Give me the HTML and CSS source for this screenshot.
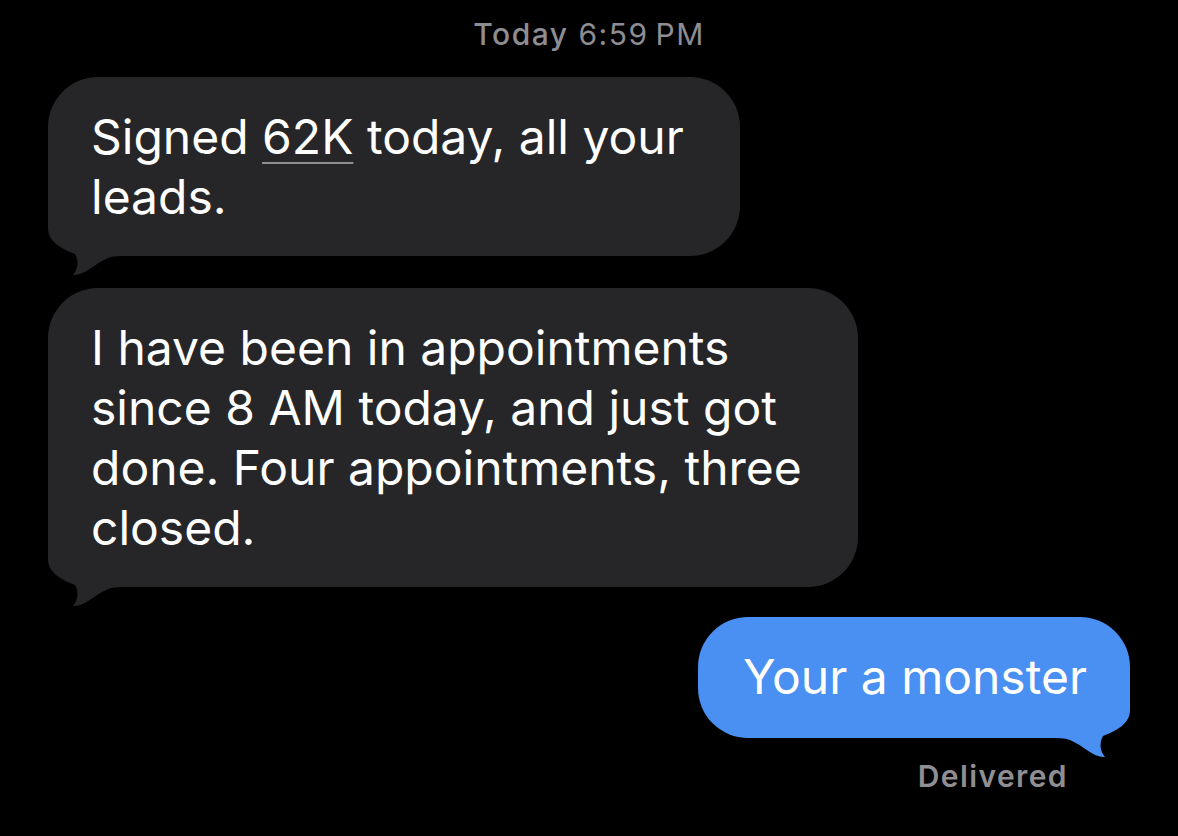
FILE: index.html
```html
<!DOCTYPE html>
<html lang="en">
<head>
    <meta charset="UTF-8">
    <meta name="viewport" content="width=device-width, initial-scale=1.0">
    <title>Messages</title>
    <link rel="stylesheet" href="styles.css">
</head>
<body>
    <div class="thread">
        <div class="stamp"><span class="stamp-day">Today</span> 6:59&#8201;PM</div>

        <div class="msg msg-in">
            Signed <span class="data-link">62K</span> today, all your<br>leads.
            <svg class="tail" viewBox="0 0 80 70" width="80" height="70" aria-hidden="true">
                <path d="M0 0 L0 22 C0 36 14 43 27 48 C31 55 30 63 25 69 C36 70 46 58 60 52 C66 50 72 50 80 50 L80 0 Z"/>
            </svg>
        </div>

        <div class="msg msg-in">
            I have been in appointments<br>since 8 AM today, and just got<br>done. Four appointments, three<br>closed.
            <svg class="tail" viewBox="0 0 80 70" width="80" height="70" aria-hidden="true">
                <path d="M0 0 L0 22 C0 36 14 43 27 48 C31 55 30 63 25 69 C36 70 46 58 60 52 C66 50 72 50 80 50 L80 0 Z"/>
            </svg>
        </div>

        <div class="msg msg-out">
            Your a monster
            <svg class="tail" viewBox="0 0 80 70" width="80" height="70" aria-hidden="true">
                <path d="M0 0 L0 22 C0 36 14 43 27 48 C31 55 30 63 25 69 C36 70 46 58 60 52 C66 50 72 50 80 50 L80 0 Z"/>
            </svg>
        </div>

        <div class="status">Delivered</div>
    </div>
</body>
</html>
```

FILE: styles.css
```css
/* General styles */
body {
    margin: 0;
    padding: 0;
    background-color: #000;
    font-family: Inter, "Noto Sans", sans-serif;
    color: #fff;
}

/* Conversation column */
.thread {
    display: flex;
    flex-direction: column;
    align-items: flex-start;
    padding: 16px 48px 0;
}

/* Timestamp header */
.stamp {
    align-self: center;
    font-size: 30px;
    line-height: 36px;
    letter-spacing: 1.5px;
    color: #8d8d92;
    margin-bottom: 25px;
}

.stamp-day {
    font-weight: 500;
}

/* Message bubbles */
.msg {
    position: relative; /* for the tail */
    isolation: isolate; /* keeps the tail under the text */
    font-size: 48px;
    line-height: 60px;
    padding: 30px 56px 29px 43px;
    border-radius: 50px;
    margin-bottom: 32px;
}

.msg-in {
    background-color: #262628;
    fill: #262628;
}

.msg-in + .msg-in {
    margin-bottom: 30px;
}

.msg-out {
    align-self: flex-end;
    background-color: #4a8ff2;
    fill: #4a8ff2;
    padding: 30px 43px 31px 45px;
    margin-bottom: 0;
}

.tail {
    position: absolute;
    left: 0;
    bottom: -20px;
    z-index: -1;
}

.msg-out .tail {
    left: auto;
    right: 0;
    transform: scaleX(-1);
}

.data-link {
    text-decoration: underline;
    text-decoration-color: #8e8e93;
    text-decoration-thickness: 2px;
    text-underline-offset: 8px;
}

/* Delivery status */
.status {
    align-self: flex-end;
    margin: 20px 62px 0 0;
    font-size: 30px;
    line-height: 36px;
    letter-spacing: 1.4px;
    font-weight: 600;
    color: #8e8e93;
}
```
